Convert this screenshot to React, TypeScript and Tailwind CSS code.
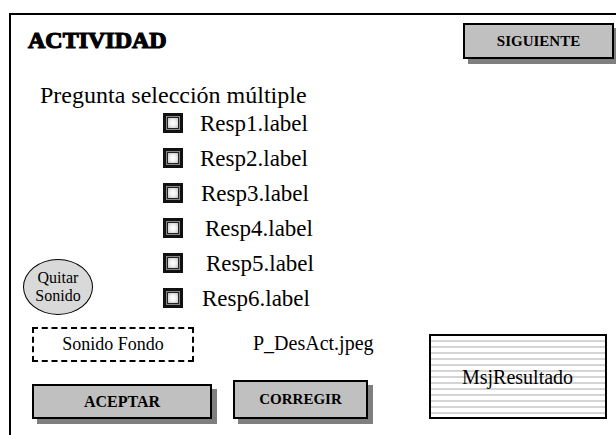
import React from 'react';

const RESPUESTAS = [
  { label: 'Resp1.label', gap: 'ml-[17px]' },
  { label: 'Resp2.label', gap: 'ml-[17px]' },
  { label: 'Resp3.label', gap: 'ml-[18px]' },
  { label: 'Resp4.label', gap: 'ml-[22px]' },
  { label: 'Resp5.label', gap: 'ml-[23px]' },
  { label: 'Resp6.label', gap: 'ml-[19px]' },
];

const Casilla = () => (
  <div className="w-[20px] h-[20px] shrink-0 border-[3px] border-[#111] bg-[#888] p-px">
    <div className="w-full h-full border border-[#222] bg-[radial-gradient(circle,#ffffff_0%,#f0f0f0_45%,#bdbdbd_100%)]" />
  </div>
);

const Boton = ({ texto, className }: { texto: string; className: string }) => (
  <button
    className={
      'flex items-center justify-center bg-[#c0c0c0] border-2 border-black shadow-[5px_5px_0_#7f7f7f] font-bold text-black ' +
      className
    }
  >
    {texto}
  </button>
);

export default function App() {
  return (
    <div className="w-[616px] h-[435px] overflow-hidden bg-white pl-[9px] pt-[13px] font-[family-name:Liberation_Serif,serif] text-black">
      <div className="w-[607px] h-[440px] border-l-2 border-t-2 border-black flex flex-col">
        {/* cabecera */}
        <div className="flex items-start">
          <h1 className="ml-[17px] mt-[13px] text-[24px] leading-none font-black [-webkit-text-stroke:1.2px_black]">
            ACTIVIDAD
          </h1>
          <Boton texto="SIGUIENTE" className="ml-auto mr-[2px] mt-[8px] w-[151px] h-[36px] text-[15px]" />
        </div>

        <p className="ml-[29px] mt-[24px] text-[24px] leading-none">Pregunta selección múltiple</p>

        {/* respuestas + quitar sonido */}
        <div className="flex items-start mt-[6px]">
          <div className="ml-[12px] mt-[146px] w-[70px] h-[56px] rounded-[50%] bg-[#d9d9d9] border border-black flex flex-col items-center justify-center text-[16px] leading-[18px]">
            <span>Quitar</span>
            <span>Sonido</span>
          </div>
          <div className="ml-[70px] flex flex-col gap-[15px]">
            {RESPUESTAS.map((r) => (
              <div key={r.label} className="flex items-center h-[20px]">
                <Casilla />
                <span className={'text-[23px] leading-none ' + r.gap}>{r.label}</span>
              </div>
            ))}
          </div>
        </div>

        {/* parte inferior */}
        <div className="flex items-end mt-[12px]">
          <div className="ml-[21px] flex flex-col w-[180px]">
            <div className="w-[162px] h-[35px] border-2 border-dashed border-black flex items-center justify-center text-[18px]">
              Sonido Fondo
            </div>
            <Boton texto="ACEPTAR" className="mt-[22px] w-[180px] h-[35px] text-[16px]" />
          </div>
          <div className="ml-[21px] flex flex-col">
            <span className="ml-[20px] text-[20px] leading-none">P_DesAct.jpeg</span>
            <Boton texto="CORREGIR" className="mt-[27px] w-[135px] h-[39px] text-[15px]" />
          </div>
          <div className="ml-[55px] w-[178px] h-[85px] border-2 border-black bg-[repeating-linear-gradient(to_bottom,#ffffff_0px,#ffffff_4px,#d4d4d4_4px,#d4d4d4_6px)] flex items-center justify-center text-[20px]">
            MsjResultado
          </div>
        </div>
      </div>
    </div>
  );
}
